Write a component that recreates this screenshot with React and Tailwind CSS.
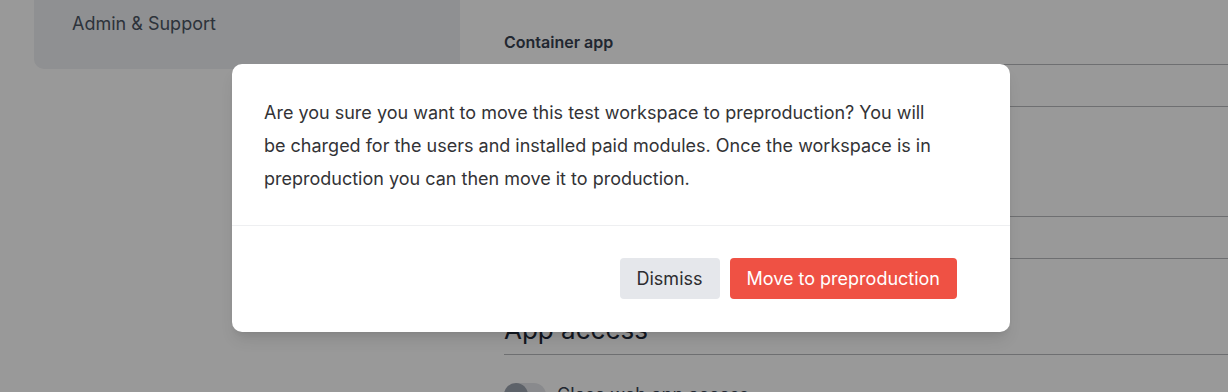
import React from 'react';

const font = { fontFamily: 'Inter, "Liberation Sans", sans-serif' };

const App = () => {
  return (
    <div className="relative w-[1228px] h-[392px] overflow-hidden bg-white" style={font}>
      {/* Page behind the dialog */}
      <div className="flex">
        <aside className="ml-[34px] w-[426px] h-[69px] rounded-bl-[10px] bg-[#eef0f3] pl-[38px] pt-[10px]">
          <span className="text-[18px] text-[#4b5563]">Admin &amp; Support</span>
        </aside>
        <main className="ml-[44px] flex-1">
          <div className="pt-[30px] pb-[10px] text-[16px] font-semibold text-[#374151]">Container app</div>
          <div className="h-[42px] border-t border-[#b8b9bd]" />
          <div className="h-[110px] border-t border-[#b8b9bd]" />
          <div className="h-[42px] border-t border-[#b8b9bd]" />
          <div className="h-[52px] border-t border-[#b8b9bd]" />
          <div className="pb-[5px] text-[26px] text-[#1f2937]">App access</div>
          <div className="border-t border-[#b8b9bd]" />
          <div className="mt-[26px] flex items-center gap-[11px]">
            <div className="relative w-[42px] h-[24px] rounded-full bg-[#e5e7eb]">
              <div className="absolute left-0 top-0 w-[24px] h-[24px] rounded-full bg-[#9ca3af]" />
            </div>
            <span className="text-[18px] text-[#374151]">Close web app access</span>
          </div>
        </main>
      </div>

      {/* Overlay */}
      <div className="absolute inset-0 bg-black/40" />

      {/* Dialog */}
      <div className="absolute left-[232px] top-[64px] w-[778px] rounded-[10px] bg-white shadow-lg">
        <div className="pl-8 pt-8 pb-[30px]">
          <p className="w-[680px] text-[18px] leading-[33px] text-[#333336]">
            Are you sure you want to move this test workspace to preproduction? You will be charged for the users and installed paid modules. Once the workspace is in preproduction you can then move it to production.
          </p>
        </div>
        <div className="flex justify-end gap-[10px] border-t border-[#eeeff1] pt-[32px] pb-[33px] pr-[53px]">
          <button className="h-[41px] rounded-[4px] bg-[#e5e7eb] px-[17px] text-[18px] text-[#2d2d30]">Dismiss</button>
          <button className="h-[41px] rounded-[4px] bg-[#ef5144] px-[17px] text-[18px] text-white">Move to preproduction</button>
        </div>
      </div>
    </div>
  );
};

export default App;
